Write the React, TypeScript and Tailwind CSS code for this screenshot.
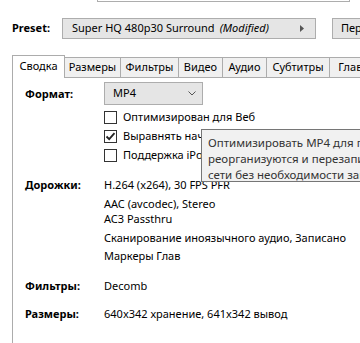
import React from "react";

const font = { fontFamily: '"Noto Sans", "Open Sans", sans-serif' };

function Check({ checked }: { checked?: boolean }) {
  return (
    <div className="w-[13px] h-[13px] border border-[#333333] bg-white flex items-center justify-center shrink-0">
      {checked && (
        <svg width="11" height="11" viewBox="0 0 11 11">
          <path d="M1.5 5.5 L4.2 8.2 L9.5 2.2" fill="none" stroke="#222" strokeWidth="1.8" />
        </svg>
      )}
    </div>
  );
}

function Tab({ label, w, selected }: { label: string; w: string; selected?: boolean }) {
  if (selected) {
    return (
      <div className={`${w} h-[23px] bg-white border border-b-0 border-[#acacac] flex items-center justify-center text-black relative z-10 -mb-px pb-[2px] shrink-0`}>
        {label}
      </div>
    );
  }
  return (
    <div className={`${w} h-[20px] bg-[#f0f0f0] border border-l-0 border-b-0 border-[#acacac] flex items-center justify-center text-black shrink-0`}>
      {label}
    </div>
  );
}

export default function App() {
  return (
    <div className="w-[360px] h-[343px] overflow-hidden bg-white relative text-[11px] text-black" style={font}>
      {/* partial box at top */}
      <div className="ml-[97px] w-[253px] h-[2px] border-b border-x border-[#adadad]" />

      {/* preset row */}
      <div className="flex items-center mt-[16px] h-[21px]">
        <div className="w-[62px] pl-[12px] font-bold shrink-0">Preset:</div>
        <div className="w-[254px] h-[21px] border border-[#adadad] bg-[#e5e5e5] flex items-center pl-[9px] pr-[11px] whitespace-nowrap shrink-0">
          <span>Super HQ 480p30 Surround</span>
          <span className="italic ml-[5px]">(Modified)</span>
          <div className="flex-1" />
          <svg width="4" height="7" viewBox="0 0 4 7">
            <path d="M0 0 L4 3.5 L0 7 Z" fill="#555" />
          </svg>
        </div>
        <div className="ml-[16px] w-[60px] h-[21px] border border-[#adadad] bg-[#e5e5e5] flex items-center pl-[8px] whitespace-nowrap shrink-0 overflow-hidden">
          Переименовать
        </div>
      </div>

      {/* tabs */}
      <div className="mt-[16px] pl-[12px] flex items-end whitespace-nowrap">
        <Tab label="Сводка" w="w-[53px]" selected />
        <Tab label="Размеры" w="w-[56px]" />
        <Tab label="Фильтры" w="w-[58px]" />
        <Tab label="Видео" w="w-[44px]" />
        <Tab label="Аудио" w="w-[44px]" />
        <Tab label="Субтитры" w="w-[63px]" />
        <Tab label="Главы" w="w-[50px]" />
      </div>

      {/* panel */}
      <div className="ml-[12px] w-[400px] h-[300px] border-l border-t border-[#acacac] pl-[12px]">
        {/* Format */}
        <div className="flex mt-[4px]">
          <div className="w-[79px] font-bold leading-[23px]">Формат:</div>
          <div>
            <div className="w-[99px] h-[23px] border border-[#adadad] bg-[#e5e5e5] flex items-center pl-[8px] pr-[6px]">
              <span>MP4</span>
              <div className="flex-1" />
              <svg width="8" height="5" viewBox="0 0 8 5">
                <path d="M0.5 0.5 L4 4 L7.5 0.5" fill="none" stroke="#555" strokeWidth="1" />
              </svg>
            </div>
            <div className="mt-[3px] flex flex-col">
              <div className="h-[19px] flex items-center gap-[6px] whitespace-nowrap">
                <Check />
                <span>Оптимизирован для Веб</span>
              </div>
              <div className="h-[19px] flex items-center gap-[6px] whitespace-nowrap">
                <Check checked />
                <span>Выравнять начало</span>
              </div>
              <div className="h-[19px] flex items-center gap-[6px] whitespace-nowrap">
                <Check />
                <span>Поддержка iPod 5G</span>
              </div>
            </div>
          </div>
        </div>

        {/* Tracks */}
        <div className="flex mt-[12px] leading-[15px]">
          <div className="w-[79px] font-bold">Дорожки:</div>
          <div className="flex flex-col whitespace-nowrap">
            <div>H.264 (x264), 30 FPS PFR</div>
            <div className="mt-[4px]">AAC (avcodec), Stereo</div>
            <div>AC3 Passthru</div>
            <div className="mt-[4px]">Сканирование иноязычного аудио, Записано</div>
            <div className="mt-[3px]">Маркеры Глав</div>
          </div>
        </div>

        {/* Filters */}
        <div className="flex mt-[15px] leading-[15px]">
          <div className="w-[79px] font-bold">Фильтры:</div>
          <div>Decomb</div>
        </div>

        {/* Dimensions */}
        <div className="flex mt-[13px] leading-[15px]">
          <div className="w-[79px] font-bold">Размеры:</div>
          <div className="whitespace-nowrap">640x342 хранение, 641x342 вывод</div>
        </div>
      </div>

      {/* tooltip */}
      <div className="absolute left-[201px] top-[129px] w-[220px] h-[53px] bg-[#f1f1f1] border border-[#767676] pl-[6px] pt-[5px] text-[11.5px] leading-[16px] text-[#333] whitespace-nowrap">
        <div>Оптимизировать MP4 для потоковой</div>
        <div>реорганизуются и перезаписываются</div>
        <div>сети без необходимости загрузки</div>
      </div>
    </div>
  );
}
